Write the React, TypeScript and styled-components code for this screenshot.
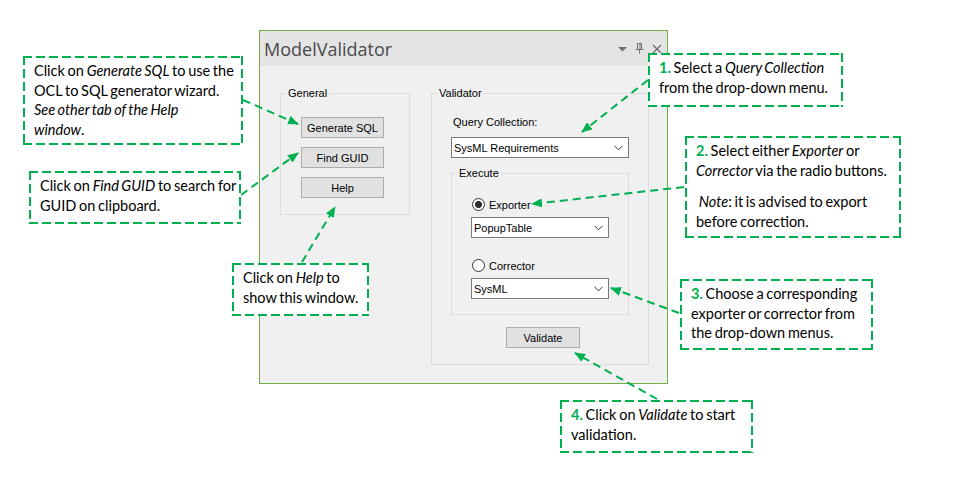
import React from "react";
import styled, { createGlobalStyle } from "styled-components";

const GREEN = "#00b050";

const GlobalStyle = createGlobalStyle`
  html, body {
    margin: 0;
    padding: 0;
    background: #ffffff;
  }
  body {
    font-family: "Liberation Sans", Arial, sans-serif;
  }
`;

const Canvas = styled.div`
  position: relative;
  width: 961px;
  height: 480px;
  overflow: hidden;
  background: #ffffff;
`;

/* ---------- the tool window ---------- */

const Window = styled.div`
  position: absolute;
  left: 259px;
  top: 30px;
  width: 409px;
  height: 354px;
  box-sizing: border-box;
  border: 1px solid #70ad47;
  background: #f0f0f0;
  display: flex;
  flex-direction: column;
`;

const TitleBar = styled.div`
  height: 35px;
  flex: none;
  background: #e4e4e4;
  display: flex;
  align-items: center;
  justify-content: space-between;
  padding: 0 5px 0 4px;
`;

const Title = styled.span`
  font-family: "Open Sans", "Noto Sans", sans-serif;
  font-size: 18px;
  color: #4a4a4a;
  line-height: 1;
`;

const TitleIcons = styled.div`
  display: flex;
  align-items: center;
  gap: 8px;
  color: #707070;
`;

const Body = styled.div`
  flex: 1;
  display: flex;
  align-items: flex-start;
  gap: 21px;
  padding: 27px 19px 0 20px;
`;

const GroupBox = styled.div<{ $w: number; $h: number }>`
  position: relative;
  box-sizing: border-box;
  width: ${({ $w }) => $w}px;
  height: ${({ $h }) => $h}px;
  border: 1px solid #dcdcdc;
  flex: none;
`;

const Legend = styled.span`
  position: absolute;
  top: -7px;
  left: 5px;
  padding: 0 2px;
  background: #f0f0f0;
  font-size: 11px;
  line-height: 13px;
  color: #000;
`;

const ButtonColumn = styled.div`
  display: flex;
  flex-direction: column;
  gap: 9px;
  padding: 23px 0 0 20px;
`;

const Button = styled.button<{ $w: number }>`
  box-sizing: border-box;
  width: ${({ $w }) => $w}px;
  height: 21px;
  padding: 0;
  border: 1px solid #adadad;
  background: #e1e1e1;
  font-family: "Liberation Sans", Arial, sans-serif;
  font-size: 11px;
  color: #000;
`;

const ValidatorContent = styled.div`
  display: flex;
  flex-direction: column;
  align-items: flex-start;
  padding: 22px 19px 0 19px;
`;

const FieldLabel = styled.div`
  font-size: 11px;
  line-height: 13px;
  margin: 0 0 8px 2px;
`;

const Select = styled.div<{ $w: number }>`
  box-sizing: border-box;
  width: ${({ $w }) => $w}px;
  height: 21px;
  background: #fff;
  border: 1px solid #7a7a7a;
  display: flex;
  align-items: center;
  justify-content: space-between;
  padding: 0 5px 0 2px;
  font-size: 11px;
  color: #000;
`;

const ExecuteSlot = styled.div`
  margin-top: 15px;
`;

const ExecuteContent = styled.div`
  display: flex;
  flex-direction: column;
  align-items: flex-start;
  padding: 24px 0 0 19px;
`;

const RadioRow = styled.div<{ $gapTop: number }>`
  display: flex;
  align-items: center;
  gap: 4px;
  height: 13px;
  margin: ${({ $gapTop }) => $gapTop}px 0 6px 1px;
  font-size: 11px;
`;

const RadioDot = styled.span<{ $checked: boolean }>`
  box-sizing: border-box;
  width: 13px;
  height: 13px;
  border-radius: 50%;
  border: 1px solid #333;
  background: ${({ $checked }) =>
    $checked
      ? "radial-gradient(circle, #333 0 3.3px, #fff 3.8px)"
      : "#fff"};
`;

const ValidateWrap = styled.div`
  margin: 12px 0 0 55px;
`;

/* ---------- annotations ---------- */

const Callout = styled.div<{ $x: number; $y: number; $w: number; $h: number }>`
  position: absolute;
  left: ${({ $x }) => $x}px;
  top: ${({ $y }) => $y}px;
  width: ${({ $w }) => $w}px;
  height: ${({ $h }) => $h}px;
  box-sizing: border-box;
  padding: 5px 6px 0 11px;
  background:
    linear-gradient(90deg, ${GREEN} 68%, transparent 0) top left / 13px 2px repeat-x,
    linear-gradient(90deg, ${GREEN} 68%, transparent 0) bottom left / 13px 2px repeat-x,
    linear-gradient(180deg, ${GREEN} 68%, transparent 0) top left / 2px 13px repeat-y,
    linear-gradient(180deg, ${GREEN} 68%, transparent 0) top right / 2px 13px repeat-y,
    #ffffff;
  font-family: "Lato", "Open Sans", sans-serif;
  font-size: 14.5px;
  word-spacing: -1px;
  line-height: 19.5px;
  color: #000;
  white-space: nowrap;
`;

const Num = styled.b`
  color: ${GREEN};
  font-weight: 700;
`;

const Para = styled.div`
  & + & {
    margin-top: 12px;
  }
`;

const Arrows = styled.svg`
  position: absolute;
  left: 0;
  top: 0;
  pointer-events: none;
`;

const Chevron = () => (
  <svg width="9" height="6" viewBox="0 0 9 6">
    <path d="M0.5 0.8 L4.5 4.8 L8.5 0.8" fill="none" stroke="#333" strokeWidth="1" />
  </svg>
);

const arrows: [number, number, number, number][] = [
  [243, 100, 298, 124],
  [241, 195, 298, 153],
  [302, 262, 335, 207],
  [648, 80, 582, 132],
  [684, 187, 532, 204],
  [679, 313, 611, 288],
  [657, 399, 575, 353],
];

export default function App() {
  return (
    <>
      <GlobalStyle />
      <Canvas>
        <Window>
          <TitleBar>
            <Title>ModelValidator</Title>
            <TitleIcons>
              <svg width="9" height="6" viewBox="0 0 9 6">
                <path d="M0 1 L9 1 L4.5 5.5 Z" fill="currentColor" />
              </svg>
              <svg width="9" height="11" viewBox="0 0 9 11">
                <path
                  d="M2.5 0.5 H6.5 V6 M2.5 0.5 V6 M0.5 6.5 H8.5 M4.5 6.5 V10.5 M5 1 V6"
                  fill="none"
                  stroke="currentColor"
                  strokeWidth="1"
                />
              </svg>
              <svg width="10" height="10" viewBox="0 0 10 10">
                <path d="M1 1 L9 9 M9 1 L1 9" stroke="currentColor" strokeWidth="1.4" />
              </svg>
            </TitleIcons>
          </TitleBar>
          <Body>
            <GroupBox $w={130} $h={122}>
              <Legend>General</Legend>
              <ButtonColumn>
                <Button $w={83}>Generate SQL</Button>
                <Button $w={83}>Find GUID</Button>
                <Button $w={83}>Help</Button>
              </ButtonColumn>
            </GroupBox>
            <GroupBox $w={218} $h={272}>
              <Legend>Validator</Legend>
              <ValidatorContent>
                <FieldLabel>Query Collection:</FieldLabel>
                <Select $w={178}>
                  SysML Requirements
                  <Chevron />
                </Select>
                <ExecuteSlot>
                  <GroupBox $w={178} $h={142}>
                    <Legend>Execute</Legend>
                    <ExecuteContent>
                      <RadioRow $gapTop={0}>
                        <RadioDot $checked />
                        Exporter
                      </RadioRow>
                      <Select $w={138}>
                        PopupTable
                        <Chevron />
                      </Select>
                      <RadioRow $gapTop={21}>
                        <RadioDot $checked={false} />
                        Corrector
                      </RadioRow>
                      <Select $w={138}>
                        SysML
                        <Chevron />
                      </Select>
                    </ExecuteContent>
                  </GroupBox>
                </ExecuteSlot>
                <ValidateWrap>
                  <Button $w={74}>Validate</Button>
                </ValidateWrap>
              </ValidatorContent>
            </GroupBox>
          </Body>
        </Window>

        <Arrows width="961" height="480" viewBox="0 0 961 480">
          <defs>
            <marker
              id="head"
              markerUnits="userSpaceOnUse"
              markerWidth="11"
              markerHeight="9"
              refX="10"
              refY="4.5"
              orient="auto"
            >
              <path d="M0 0 L11 4.5 L0 9 Z" fill={GREEN} />
            </marker>
          </defs>
          {arrows.map(([x1, y1, x2, y2], i) => (
            <line
              key={i}
              x1={x1}
              y1={y1}
              x2={x2}
              y2={y2}
              stroke={GREEN}
              strokeWidth="2"
              strokeDasharray="8 5"
              markerEnd="url(#head)"
            />
          ))}
        </Arrows>

        <Callout $x={23} $y={56} $w={220} $h={89}>
          Click on <i>Generate SQL</i> to use the
          <br />
          OCL to SQL generator wizard.
          <br />
          <i>See other tab of the Help</i>
          <br />
          <i>window</i>.
        </Callout>
        <Callout $x={29} $y={171} $w={212} $h={53}>
          Click on <i>Find GUID</i> to search for
          <br />
          GUID on clipboard.
        </Callout>
        <Callout $x={232} $y={263} $w={137} $h={53}>
          Click on <i>Help</i> to
          <br />
          show this window.
        </Callout>
        <Callout $x={648} $y={53} $w={195} $h={54}>
          <Num>1.</Num> Select a <i>Query Collection</i>
          <br />
          from the drop-down menu.
        </Callout>
        <Callout $x={685} $y={136} $w={216} $h={102}>
          <Para>
            <Num>2.</Num> Select either <i>Exporter</i> or
            <br />
            <i>Corrector</i> via the radio buttons.
          </Para>
          <Para>
            &nbsp;<i>Note</i>: it is advised to export
            <br />
            before correction.
          </Para>
        </Callout>
        <Callout $x={680} $y={279} $w={193} $h={71}>
          <Num>3.</Num> Choose a corresponding
          <br />
          exporter or corrector from
          <br />
          the drop-down menus.
        </Callout>
        <Callout $x={560} $y={400} $w={193} $h={53}>
          <Num>4.</Num> Click on <i>Validate</i> to start
          <br />
          validation.
        </Callout>
      </Canvas>
    </>
  );
}
